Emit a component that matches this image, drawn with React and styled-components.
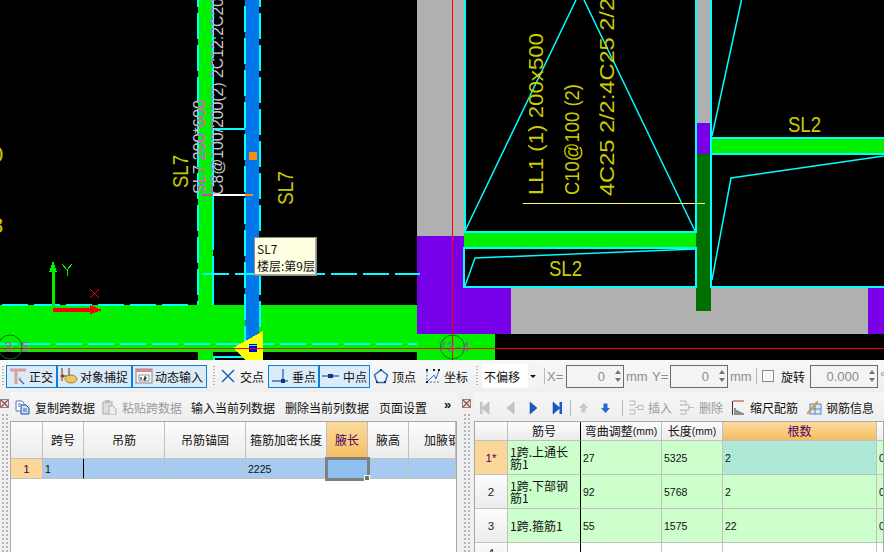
import React from 'react'
import styled, { createGlobalStyle } from 'styled-components'

const cjk = '"Noto Sans CJK SC", "Liberation Sans", sans-serif'
const cyan = '#00ffff'
const green = '#00f000'

const GlobalStyle = createGlobalStyle`
    html, body { margin: 0; padding: 0; background: #f0f0f0; }
    body { overflow: hidden; font-family: ${cjk}; }
`

const Page = styled.div`
    width: 884px;
    height: 552px;
    overflow: hidden;
    display: flex;
    flex-direction: column;
    color: #111;
    font-size: 12px;
`

const CadArea = styled.div`
    position: relative;
    height: 360px;
    flex: none;
    background: #000;
`

const CadSvg = styled.svg`
    display: block;
    text { font-family: "Liberation Sans", sans-serif; }
`

const Tooltip = styled.div`
    position: absolute;
    left: 254px;
    top: 237px;
    width: 63px;
    height: 39px;
    padding: 2px 0 0 2px;
    box-sizing: border-box;
    background: #ffffe1;
    border: 1px solid #8c8c8c;
    box-shadow: inset -1px -1px 0 #aaa;
    font-size: 12px;
    line-height: 17px;
    white-space: nowrap;
`

function Dashed({ x1, y1, x2, y2, dash = '26 6', offset = 0 }) {
    return <line x1={x1} y1={y1} x2={x2} y2={y2} stroke={cyan} strokeWidth="2" strokeDasharray={dash} strokeDashoffset={offset} />
}

function Rotated({ x, y, size, fill = '#c8c800', len, children }) {
    return (
        <text transform={`translate(${x} ${y}) rotate(-90)`} fontSize={size} fill={fill} textLength={len} lengthAdjust="spacingAndGlyphs">
            {children}
        </text>
    )
}

// the CAD prints these two labels grey on black and magenta where they cross the green beam
function BeamLabels({ fill }) {
    return (
        <>
            <Rotated x="205" y="194" size="16.5" fill={fill} len="94">SL7 200*600</Rotated>
            <Rotated x="223" y="195" size="16.5" fill={fill} len="197">C8@100/200(2) 2C12:2C20</Rotated>
        </>
    )
}

function CadDrawing() {
    return (
        <CadSvg width="884" height="360" viewBox="0 0 884 360" shapeRendering="crispEdges">
            <defs>
                <clipPath id="beam"><rect x="198" y="0" width="15" height="305" /></clipPath>
            </defs>
            <rect x="0" y="305" width="417" height="47" fill={green} />
            <rect x="198" y="0" width="15" height="360" fill={green} />
            <rect x="245" y="0" width="14" height="345" fill="#0078e8" />
            <rect x="417" y="0" width="47" height="236" fill="#b0b0b0" />
            <rect x="417" y="236" width="47" height="98" fill="#7800e8" />
            <rect x="464" y="288" width="47" height="46" fill="#7800e8" />
            <rect x="511" y="288" width="357" height="46" fill="#b0b0b0" />
            <rect x="868" y="288" width="16" height="46" fill="#7800e8" />
            <rect x="417" y="334" width="78" height="26" fill={green} />
            <rect x="696" y="0" width="15" height="123" fill="#b0b0b0" />
            <rect x="697" y="123" width="14" height="31" fill="#7800e8" />
            <rect x="696" y="154" width="15" height="157" fill="#007000" />
            <rect x="464" y="232" width="232" height="16" fill={green} />
            <rect x="711" y="138" width="173" height="16" fill={green} />

            <g fill="none" stroke={cyan} strokeWidth="2">
                <path d="M464.5 0V232H696V0" />
                <path d="M464 248H696V287H464Z" />
                <path d="M711 0V287H884" />
                <path d="M711 138H884M711 154H884" />
            </g>
            <g fill="none" stroke={cyan} strokeWidth="1.5" shapeRendering="auto">
                <path d="M465 231L576 0M584 0L695 231" />
                <path d="M712 136L741.5 0" />
                <path d="M712 280L731 178L884 156" />
                <path d="M465 286L475 258L696 249" />
            </g>

            <Dashed x1="198" y1="0" x2="198" y2="305" offset="19" />
            <Dashed x1="213" y1="0" x2="213" y2="305" dash="58 6" />
            <Dashed x1="245" y1="0" x2="245" y2="345" offset="26" />
            <Dashed x1="260" y1="0" x2="260" y2="345" offset="19" />
            <Dashed x1="203" y1="274" x2="420" y2="274" />
            <Dashed x1="2" y1="305" x2="190" y2="305" />
            <Dashed x1="0" y1="344" x2="417" y2="344" offset="8" />
            <path d="M213 129H245" stroke={cyan} strokeWidth="2" />
            <path d="M213 357H245M213.5 356V360" stroke={cyan} strokeWidth="2" fill="none" />

            <path d="M213 195H245" stroke="#fff" strokeWidth="2" />
            <path d="M245 195H253" stroke="#ff8c10" strokeWidth="2" />
            <path d="M202 195H213" stroke="#d040d0" strokeWidth="2" />
            <rect x="249" y="152" width="8" height="8" fill="#ff8c10" />

            <Rotated x="188" y="188" size="22" len="33">SL7</Rotated>
            <Rotated x="293" y="205" size="22" len="34">SL7</Rotated>
            <BeamLabels fill="#c8c8c8" />
            <g clipPath="url(#beam)"><BeamLabels fill="#c850d0" /></g>
            <text x="-9" y="162" fontSize="22" fill="#c8c800">0</text>
            <text x="-9" y="233" fontSize="22" fill="#c8c800">8</text>

            <Rotated x="543" y="195" size="21" fill="#cccc00" len="162">LL1 (1) 200x500</Rotated>
            <Rotated x="578.5" y="195" size="21" fill="#cccc00" len="111">C10@100 (2)</Rotated>
            <Rotated x="613.5" y="196" size="21" fill="#cccc00" len="198">4C25 2/2:4C25 2/2</Rotated>
            <text x="549" y="276" fontSize="22" fill="#cccc00" textLength="33" lengthAdjust="spacingAndGlyphs">SL2</text>
            <text x="788" y="132" fontSize="22" fill="#cccc00" textLength="33" lengthAdjust="spacingAndGlyphs">SL2</text>
            <path d="M523 203.5H705" stroke="#ffff60" strokeWidth="1" />

            <path d="M233 348L263 331V360H245Z" fill="#ffff00" />
            <rect x="249" y="344" width="8" height="8" fill="#0000e8" />
            <path d="M249 345H257" stroke={cyan} strokeWidth="1" />
            <path d="M0 348.5H884" stroke="#ff0000" strokeWidth="1" />
            <path d="M452.5 0V360" stroke="#ff0000" strokeWidth="1" />

            <path d="M53 306V270" stroke={green} strokeWidth="3" />
            <path d="M49 272L53 261L57 272Z" fill={green} />
            <path d="M53 310H92" stroke="#ff0000" strokeWidth="4" />
            <path d="M90 305L102 310L90 314Z" fill="#ff0000" />
            <g fill="none" strokeWidth="1">
                <path d="M62 264L67 270L72 264M67 270V276" stroke={green} />
                <path d="M90 289L99 298M99 289L90 298" stroke="#ff0000" />
            </g>
            <g fill="none" strokeWidth="1" shapeRendering="auto">
                <circle cx="10" cy="347" r="12" stroke="#007000" />
                <circle cx="452.5" cy="347" r="12" stroke="#107010" />
            </g>
            <text x="4" y="352" fontSize="15" fill="#a060b0" textLength="25" lengthAdjust="spacing">3-5</text>
            <text x="438" y="352" fontSize="15" fill="#80688e" textLength="32" lengthAdjust="spacing">73-4</text>
        </CadSvg>
    )
}

const CommandBar = styled.div`
    height: 32px;
    flex: none;
    display: flex;
    align-items: center;
    padding-left: 2px;
    box-sizing: border-box;
    background: linear-gradient(#f8f8f8, #efefef);
`

const Grip = styled.span`
    width: 2px;
    height: 20px;
    margin: ${p => p.$m || '0 3px 0 2px'};
    flex: none;
    background-image: linear-gradient(#b0b0b0 50%, transparent 50%);
    background-size: 2px 3px;
`

const Toggle = styled.div`
    height: 23px;
    width: ${p => p.$w}px;
    flex: none;
    display: flex;
    align-items: center;
    gap: ${p => p.$gap ?? 2}px;
    padding-left: 2px;
    box-sizing: border-box;
    white-space: nowrap;
    background: ${p => (p.$on ? '#dcebf8' : 'transparent')};
    border: 1px solid ${p => (p.$on ? '#0c80d8' : 'transparent')};
`

const Divider = styled.span`
    width: 1px;
    height: 16px;
    flex: none;
    background: #b8b8b8;
    margin: ${p => p.$m || '0 2px'};
`

const OffsetSelect = styled.div`
    width: 57px;
    height: 24px;
    flex: none;
    display: flex;
    align-items: center;
    justify-content: space-between;
    padding: 0 3px 0 2px;
    box-sizing: border-box;
    background: linear-gradient(90deg, #fff 80%, #f4f4f4 80%);
    font-size: 12px;
    &::after { content: ''; border: 3px solid transparent; border-top: 3px solid #111; margin-top: 3px; }
`

const DimLabel = styled.span`
    flex: none;
    color: #8c8c8c;
    font-family: "Liberation Sans", sans-serif;
    font-size: 13px;
    margin: ${p => p.$m || 0};
    width: ${p => (p.$w ? `${p.$w}px` : 'auto')};
`

const Spin = styled.div`
    width: ${p => p.$w}px;
    height: 23px;
    flex: none;
    display: flex;
    align-items: center;
    box-sizing: border-box;
    border: 1px solid #6a6a6a;
    color: #8c8c8c;
    background: #f4f4f4;
    font-family: "Liberation Sans", sans-serif;
    font-size: 13px;
    > b { flex: 1; font-weight: 400; text-align: right; padding-right: 7px; }
`

const SpinArrows = styled.span`
    width: 11px;
    align-self: stretch;
    display: flex;
    flex-direction: column;
    justify-content: space-around;
    align-items: center;
    padding: 3px 0;
    box-sizing: border-box;
    &::before { content: ''; border: 3px solid transparent; border-bottom: 4px solid #777; border-top: 0; }
    &::after { content: ''; border: 3px solid transparent; border-top: 4px solid #777; border-bottom: 0; }
`

const CheckBox = styled.span`
    width: 10px;
    height: 10px;
    flex: none;
    border: 1px solid #8c8c8c;
    background: #f8f8f8;
    margin: 0 7px 0 3px;
`

const PlainLabel = styled.span`
    flex: none;
    white-space: nowrap;
    margin: ${p => p.$m || 0};
`

const Workspace = styled.div`
    flex: 1;
    display: flex;
    min-height: 0;
    background: #f0f0f0;
`

const DockGrip = styled.div`
    width: ${p => p.$w}px;
    flex: none;
    padding-top: 2px;
    padding-left: ${p => p.$pl || 0}px;
    box-sizing: border-box;
`

const DockDots = styled.div`
    width: 6px;
    height: 148px;
    margin: 3px 0 0 2px;
    background-image: radial-gradient(circle at 1px 1px, #b4b4b4 1px, transparent 1px);
    background-size: 4px 4px;
`

const Panel = styled.div`
    width: ${p => p.$w}px;
    flex: none;
    display: flex;
    flex-direction: column;
    min-height: 0;
`

const PanelTools = styled.div`
    height: 29px;
    flex: none;
    display: flex;
    align-items: center;
    box-sizing: border-box;
    padding: 2px 0 0 ${p => p.$pl || 0}px;
    background: linear-gradient(#f7f7f7, #eeeeee);
    white-space: nowrap;
`

const ToolItem = styled.div`
    display: flex;
    flex: none;
    align-items: center;
    gap: ${p => p.$gap ?? 5}px;
    margin-left: ${p => p.$ml || 0}px;
    color: ${p => (p.$off ? '#9a9a9a' : '#111')};
`

const More = styled(ToolItem)`
    font-family: "Liberation Sans", sans-serif;
    font-size: 13px;
    font-weight: 700;
    margin-top: -6px;
`

const Frame = styled.div`
    flex: 1;
    background: #fff;
    border: 1px solid #a8a8a8;
    border-width: 1px 1px 0 1px;
    overflow: hidden;
`

const Grid = styled.div`
    display: grid;
    grid-template-columns: ${p => p.$cols};
    grid-template-rows: ${p => p.$rows};
`

const Cell = styled.div`
    position: relative;
    display: flex;
    align-items: center;
    min-width: 0;
    box-sizing: border-box;
    border-right: 1px solid ${p => (p.$rule ? '#000' : '#c0c0c0')};
    border-bottom: 1px solid #c0c0c0;
    padding: 0 2px;
    line-height: 12px;
    font-family: ${cjk};
    font-size: 12px;
    background: ${p => p.$bg || '#fff'};
`

const HeadCell = styled(Cell)`
    justify-content: ${p => (p.$pl ? 'flex-start' : 'center')};
    white-space: nowrap;
    overflow: hidden;
    padding: 0 0 0 ${p => p.$pl || 0}px;
    color: ${p => (p.$active ? '#500060' : '#111')};
    background: ${p => (p.$active ? 'linear-gradient(#fbdb9e, #f3bd62)' : 'linear-gradient(#fcfcfc, #ececec)')};
`

const RowHead = styled(Cell)`
    justify-content: center;
    font-family: "Liberation Sans", sans-serif;
    font-size: 11.5px;
    color: ${p => (p.$current ? '#500060' : '#222')};
    background: ${p => (p.$current ? '#fcd79a' : 'linear-gradient(#fcfcfc, #ececec)')};
`

const NumText = styled.span`
    font-family: "Liberation Sans", sans-serif;
    font-size: 10.5px;
`

const CurrentCell = styled(Cell)`
    z-index: 1;
    background: #90c0ee;
    outline: 3px solid #808080;
    outline-offset: -1px;
    &::after {
        content: '';
        position: absolute;
        right: -3px;
        bottom: -3px;
        width: 4px;
        height: 4px;
        background: #707070;
        border: 1px solid #fff;
    }
`

function Icon({ w = 16, h = 16, children }) {
    return <svg width={w} height={h} viewBox={`0 0 ${w} ${h}`} style={{ flex: 'none' }}>{children}</svg>
}

const OrthoIcon = () => (
    <Icon w={18} h={18}>
        <path d="M1 3H17M7 3V17" stroke="#d8a0a0" strokeWidth="3" fill="none" />
        <path d="M10 12L15 17" stroke="#666" strokeWidth="1.4" />
        <path d="M10 10L13 11L11 13Z" fill="#aac" />
    </Icon>
)
const SnapIcon = () => (
    <Icon w={18} h={18}>
        <path d="M2 1V14M9 1V14M0 9H11" stroke="#8a4a30" strokeWidth="1.2" fill="none" />
        <circle cx="3" cy="9" r="1.6" fill="#a03020" />
        <ellipse cx="11" cy="12" rx="6" ry="4" fill="#e8c868" stroke="#a08030" />
    </Icon>
)
const DynamicIcon = () => (
    <Icon w={18} h={18}>
        <rect x="1" y="2" width="16" height="14" fill="#f4f4f4" stroke="#888" />
        <path d="M1 2H17V5H1Z" fill="#d88888" />
        <path d="M4 8H14V14H4Z" fill="#fff" stroke="#555" strokeWidth=".6" />
        <path d="M6 10V13M9 10H11V11.5H9V13H11" stroke="#111" fill="none" />
    </Icon>
)
const CrossIcon = () => (
    <Icon w={16} h={16}>
        <path d="M2 2L14 14M14 2L2 14" stroke="#1c6cc0" strokeWidth="1.6" />
    </Icon>
)
const PerpIcon = () => (
    <Icon w={17} h={16}>
        <path d="M12 1V14M1 13H17" stroke="#2a70c0" strokeWidth="1.4" fill="none" />
        <rect x="10" y="11" width="4" height="4" fill="#103880" />
    </Icon>
)
const MidIcon = () => (
    <Icon w={17} h={16}>
        <path d="M0 8H17" stroke="#2a70c0" strokeWidth="1.4" />
        <rect x="6" y="6" width="5" height="4" fill="#103880" />
    </Icon>
)
const VertexIcon = () => (
    <Icon w={16} h={16}>
        <path d="M8 2L14.5 7L12 14.5H4L1.5 7Z" fill="none" stroke="#2a70c0" strokeWidth="1.5" />
        <g fill="#103880"><rect x="7" y="1" width="2" height="2" /><rect x="3" y="13" width="2" height="2" /><rect x="11" y="13" width="2" height="2" /></g>
    </Icon>
)
const CoordIcon = () => (
    <Icon w={18} h={18}>
        <path d="M3 4V15H16" stroke="#2a70c0" strokeDasharray="2 1.5" fill="none" />
        <path d="M4 14L10 8L12 12L15 3" stroke="#2a70c0" fill="none" />
        <g fill="#222"><rect x="2" y="14" width="2" height="2" /><rect x="9" y="2" width="2" height="2" /><rect x="14" y="2" width="2" height="2" /><rect x="2" y="2" width="2" height="2" /></g>
    </Icon>
)
const CloseBox = () => (
    <Icon w={9} h={9}>
        <rect x=".5" y=".5" width="8" height="8" fill="#e8e4e4" stroke="#888" />
        <path d="M1 1L8 8M8 1L1 8" stroke="#a04848" strokeWidth="1.2" />
    </Icon>
)
const CopyIcon = () => (
    <Icon w={15} h={15}>
        <path d="M1 1H7L9 3V11H1Z" fill="#fff" stroke="#5a7ab0" />
        <path d="M6 5H11L14 8V14H6Z" fill="#cfe0f6" stroke="#1c4c9c" />
        <path d="M3 4H6M3 6H5M8 9H12M8 11H12" stroke="#1c4c9c" strokeWidth=".8" />
    </Icon>
)
const PasteIcon = () => (
    <Icon w={15} h={15}>
        <rect x="1" y="2" width="9" height="12" fill="#ddd" stroke="#aaa" />
        <rect x="3" y="0" width="5" height="3" fill="#bbb" />
        <path d="M7 6H11L14 9V15H7Z" fill="#eee" stroke="#b0b0b0" />
    </Icon>
)
const NavIcon = ({ dir, bar, on }) => {
    const color = on ? '#1c58c8' : '#c4c4c4'
    const d = dir === 'r' ? 'M2 1L9 7L2 13Z' : 'M9 1L2 7L9 13Z'
    return (
        <Icon w={11} h={14}>
            <path d={d} fill={color} stroke={on ? '#0c3c90' : '#b0b0b0'} strokeWidth=".5" />
            {bar && <rect x={dir === 'r' ? 8.5 : 0} y="1" width="2.5" height="12" fill={color} />}
        </Icon>
    )
}
const ArrowIcon = ({ up, on }) => (
    <Icon w={9} h={10}>
        <path d={up ? 'M4.5 0L9 5H6.5V9.5H2.5V5H0Z' : 'M4.5 10L9 5H6.5V.5H2.5V5H0Z'} fill={on ? '#2a68d0' : '#c8c8c8'} />
    </Icon>
)
const RowEditIcon = ({ del }) => (
    <Icon w={16} h={15}>
        <path d="M1 1H7V5H1M1 10H7V14H1" fill="none" stroke="#b8b8b8" />
        {del
            ? <path d="M1 5H10V10H1M9 7.5H15" stroke="#b8b8b8" fill="#f4f4f4" />
            : <path d="M7 7.5H10M10 5.5H15V9.5H10Z" stroke="#b8b8b8" fill="#f4f4f4" />}
    </Icon>
)
const ScaleIcon = () => (
    <Icon w={12} h={15}>
        <path d="M0.5 1V15M3 8V15M5 10V15M7 11V15M9 12V15M11 13V15" stroke="#333" />
        <path d="M1 1H12" stroke="#c03030" />
    </Icon>
)
const InfoIcon = () => (
    <Icon w={16} h={15}>
        <rect x="4" y="4" width="11" height="10" fill="#dce8f8" stroke="#5a80c0" />
        <path d="M9 4V14M4 9H15" stroke="#5a80c0" />
        <path d="M1 13L9 3L12 1L10 5L2 14Z" fill="#e0b050" stroke="#a07020" strokeWidth=".5" />
    </Icon>
)

const leftCols = '32px 41px 81px 81px 81px 41px 41px 47px'
const rightCols = '33px 73px 81px 61px 154px 12px'

function SpanTable() {
    const heads = ['跨号', '吊筋', '吊筋锚固', '箍筋加密长度', '腋长', '腋高']
    const blue = '#a6caf0'
    return (
        <Frame>
            <Grid $cols={leftCols} $rows="37px 20px">
                <HeadCell />
                {heads.map(h => (
                    <HeadCell key={h} $active={h === '腋长'}>{h}</HeadCell>
                ))}
                <HeadCell $pl={15}>加腋钢筋</HeadCell>
                <RowHead $current>1</RowHead>
                <Cell $bg={blue} $rule><NumText>1</NumText></Cell>
                <Cell $bg={blue} />
                <Cell $bg={blue} />
                <Cell $bg={blue}><NumText>2225</NumText></Cell>
                <CurrentCell />
                <Cell $bg={blue} />
                <Cell $bg={blue} />
            </Grid>
        </Frame>
    )
}

const rebarRows = [
    { id: '1*', name: '1跨.上通长筋1', bend: '27', len: '5325', count: '2', current: true },
    { id: '2', name: '1跨.下部钢筋1', bend: '92', len: '5768', count: '2' },
    { id: '3', name: '1跨.箍筋1', bend: '55', len: '1575', count: '22' },
]

function RebarTable() {
    const mint = '#ccffcc'
    return (
        <Frame>
            <Grid $cols={rightCols} $rows="19px 34px 34px 34px 20px">
                <HeadCell />
                <HeadCell $rule>筋号</HeadCell>
                <HeadCell>弯曲调整<NumText>(mm)</NumText></HeadCell>
                <HeadCell>长度<NumText>(mm)</NumText></HeadCell>
                <HeadCell $active>根数</HeadCell>
                <HeadCell />
                {rebarRows.map(r => (
                    <React.Fragment key={r.id}>
                        <RowHead $current={r.current}>{r.id}</RowHead>
                        <Cell $bg={mint} $rule>{r.name}</Cell>
                        <Cell $bg={mint}><NumText>{r.bend}</NumText></Cell>
                        <Cell $bg={mint}><NumText>{r.len}</NumText></Cell>
                        <Cell $bg={r.current ? '#aee9d8' : mint}><NumText>{r.count}</NumText></Cell>
                        <Cell $bg={mint}><NumText>0</NumText></Cell>
                    </React.Fragment>
                ))}
                <RowHead>4</RowHead>
                <Cell $rule />
                <Cell />
                <Cell />
                <Cell />
                <Cell />
            </Grid>
        </Frame>
    )
}

export default function App() {
    return (
        <Page>
            <GlobalStyle />
            <CadArea>
                <CadDrawing />
                <Tooltip>SL7<br />楼层:第9层</Tooltip>
            </CadArea>

            <CommandBar>
                <Grip $m="0 2px 0 0" />
                <Toggle $on $w={51}><OrthoIcon />正交</Toggle>
                <Toggle $on $w={75}><SnapIcon />对象捕捉</Toggle>
                <Toggle $on $w={75}><DynamicIcon />动态输入</Toggle>
                <Grip $m="0 2px 0 6px" />
                <Toggle $w={51} $gap={4}><CrossIcon />交点</Toggle>
                <Toggle $on $w={51} $gap={4}><PerpIcon />垂点</Toggle>
                <Toggle $on $w={51} $gap={4}><MidIcon />中点</Toggle>
                <Toggle $w={51} $gap={3}><VertexIcon />顶点</Toggle>
                <Toggle $w={48} $gap={2}><CoordIcon />坐标</Toggle>
                <Grip $m="0 4px 0 7px" />
                <OffsetSelect>不偏移</OffsetSelect>
                <Divider $m="0 2px 0 5px" />
                <DimLabel $w={19}>X=</DimLabel>
                <Spin $w={58}><b>0</b><SpinArrows /></Spin>
                <DimLabel $w={26} $m="0 0 0 2px">mm</DimLabel>
                <DimLabel $w={18}>Y=</DimLabel>
                <Spin $w={58}><b>0</b><SpinArrows /></Spin>
                <DimLabel $w={26} $m="0 0 0 2px">mm</DimLabel>
                <Divider $m="0 2px 0 0" />
                <CheckBox />
                <PlainLabel $m="0 5px 0 0">旋转</PlainLabel>
                <Spin $w={68}><b>0.000</b><SpinArrows /></Spin>
                <DimLabel $m="0 0 0 2px">°</DimLabel>
            </CommandBar>

            <Workspace>
                <DockGrip $w={10}>
                    <CloseBox />
                    <DockDots />
                </DockGrip>
                <Panel $w={447}>
                    <PanelTools $pl={5}>
                        <ToolItem><CopyIcon />复制跨数据</ToolItem>
                        <ToolItem $ml={7} $off><PasteIcon />粘贴跨数据</ToolItem>
                        <ToolItem $ml={9}>输入当前列数据</ToolItem>
                        <ToolItem $ml={10}>删除当前列数据</ToolItem>
                        <ToolItem $ml={10}>页面设置</ToolItem>
                        <More $ml={17}>»</More>
                    </PanelTools>
                    <SpanTable />
                </Panel>
                <DockGrip $w={17} $pl={5}>
                    <CloseBox />
                    <DockDots />
                </DockGrip>
                <Panel $w={410}>
                    <PanelTools $pl={6}>
                        <NavIcon dir="l" bar />
                        <ToolItem $ml={14}><NavIcon dir="l" /></ToolItem>
                        <ToolItem $ml={12}><NavIcon dir="r" on /></ToolItem>
                        <ToolItem $ml={12}><NavIcon dir="r" bar on /></ToolItem>
                        <Divider $m="0 8px" />
                        <ToolItem><ArrowIcon up /></ToolItem>
                        <ToolItem $ml={13}><ArrowIcon on /></ToolItem>
                        <Divider $m="0 5px 0 12px" />
                        <ToolItem $off $gap={4}><RowEditIcon />插入</ToolItem>
                        <ToolItem $ml={7} $off $gap={4}><RowEditIcon del />删除</ToolItem>
                        <ToolItem $ml={9} $gap={6}><ScaleIcon />缩尺配筋</ToolItem>
                        <ToolItem $ml={8} $gap={4}><InfoIcon />钢筋信息</ToolItem>
                    </PanelTools>
                    <RebarTable />
                </Panel>
            </Workspace>
        </Page>
    )
}
